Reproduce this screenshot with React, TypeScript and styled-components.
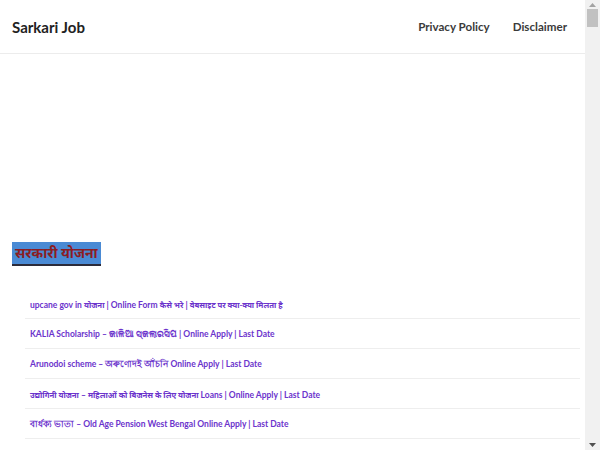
import React from "react";
import styled, { createGlobalStyle } from "styled-components";

const Global = createGlobalStyle`
  html, body { margin: 0; padding: 0; background: #fff; }
  body { font-family: "Lato", "Noto Sans", sans-serif; color: #333; }
  #root { width: calc(100% - 15px); }
  a { text-decoration: none; }
`;

const Header = styled.header`
  height: 53px;
  border-bottom: 1px solid #ececec;
  display: flex;
  align-items: center;
  justify-content: space-between;
  padding: 0 18px 0 12px;
`;

const Brand = styled.a`
  font-size: 15px;
  font-weight: 700;
  color: #222;
`;

const Nav = styled.nav`
  display: flex;
  gap: 23px;
`;

const NavLink = styled.a`
  font-size: 11.6px;
  font-weight: 700;
  color: #3a3a3a;
`;

const Main = styled.main`
  padding: 0 5px 0 12px;
`;

const AdSpace = styled.div`
  height: 188px;
`;

const SectionTitle = styled.h2`
  display: inline-block;
  margin: 0;
  background: #4a8ad4;
  color: #8c1c22;
  font-size: 14px;
  font-weight: 700;
  line-height: 22px;
  padding: 0 3px 0 3px;
  border-bottom: 2px solid #2b2b3a;
`;

const List = styled.ul`
  list-style: none;
  margin: 23px 0 0 13px;
  padding: 0;
`;

const Item = styled.li`
  border-bottom: 1px solid #eeeeee;
  display: flex;
  align-items: center;
  padding: 2px 0 0 5px;
  box-sizing: border-box;
  height: 30px;
`;

const ItemLink = styled.a`
  font-size: 8.5px;
  font-weight: 700;
  color: #6b33cc;
  white-space: nowrap;
`;

const Deva = styled.span`
  font-size: 7.8px;
  font-weight: 700;
`;

const Section = styled.section`
  margin-top: 28px;
`;

const ScrollTrack = styled.div`
  position: fixed;
  top: 0;
  right: 0;
  width: 15px;
  height: 100vh;
  background: #f1f1f1;
`;

const ScrollThumb = styled.div`
  position: absolute;
  top: 9px;
  left: 2px;
  width: 11px;
  height: 18px;
  background: #c1c1c1;
`;

const Arrow = styled.svg<{ $bottom?: boolean }>`
  position: absolute;
  left: 4px;
  ${(p) => (p.$bottom ? "bottom: 3px;" : "top: 3px;")}
  width: 7px;
  height: 4px;
`;

const posts = [
  "upcane gov in योजना | Online Form कैसे भरे | वेबसाइट पर क्या-क्या मिलता है",
  "KALIA Scholarship – କାଳିଆ ସ୍କଲାରସିପ | Online Apply | Last Date",
  "Arunodoi scheme – অৰুণোদই আঁচনি Online Apply | Last Date",
  "उद्योगिनी योजना – महिलाओं को बिजनेस के लिए योजना Loans | Online Apply | Last Date",
  "বার্ধক্য ভাতা – Old Age Pension West Bengal Online Apply | Last Date",
  "ई श्रम कार्ड योजना – रजिस्ट्रेशन कैसे करें | Online Apply | Last Date",
  "प्रधानमंत्री आवास योजना लिस्ट | Online Apply | Last Date",
  "किसान सम्मान निधि योजना | Status Check | Last Date",
  "आयुष्मान भारत योजना | Online Apply | Last Date",
  "राशन कार्ड लिस्ट | Online Apply | Last Date",
];

const more = [
  "SSC GD Constable Recruitment | Online Apply | Last Date",
  "Railway Group D Recruitment | Online Apply | Last Date",
  "Bihar Police Constable Bharti | Online Apply | Last Date",
  "UP Police Recruitment | Online Apply | Last Date",
  "Indian Army Agniveer Bharti | Online Apply | Last Date",
  "Post Office GDS Recruitment | Online Apply | Last Date",
  "CTET Notification | Online Apply | Last Date",
  "NVS Recruitment | Online Apply | Last Date",
];

function renderTitle(t: string) {
  const parts = t.split(/([\u0900-\u097F][\u0900-\u097F\s\-]*[\u0900-\u097F]|[\u0900-\u097F])/);
  return parts.map((p, i) =>
    /[\u0900-\u097F]/.test(p) ? <Deva key={i}>{p}</Deva> : <React.Fragment key={i}>{p}</React.Fragment>
  );
}

function PostList({ items }: { items: string[] }) {
  return (
    <List>
      {items.map((p) => (
        <Item key={p}>
          <ItemLink href="#">{renderTitle(p)}</ItemLink>
        </Item>
      ))}
    </List>
  );
}

export default function App() {
  return (
    <>
      <Global />
      <Header>
        <Brand href="#">Sarkari Job</Brand>
        <Nav>
          <NavLink href="#">Privacy Policy</NavLink>
          <NavLink href="#">Disclaimer</NavLink>
        </Nav>
      </Header>
      <Main>
        <AdSpace />
        <SectionTitle>सरकारी योजना</SectionTitle>
        <PostList items={posts} />
        <AdSpace />
        <Section>
          <SectionTitle>सरकारी नौकरी</SectionTitle>
          <PostList items={more} />
        </Section>
        <AdSpace />
      </Main>
      <ScrollTrack>
        <Arrow viewBox="0 0 7 4">
          <path d="M0 4 L3.5 0 L7 4 Z" fill="#a3a3a3" />
        </Arrow>
        <ScrollThumb />
        <Arrow $bottom viewBox="0 0 7 4">
          <path d="M0 0 L3.5 4 L7 0 Z" fill="#505050" />
        </Arrow>
      </ScrollTrack>
    </>
  );
}
